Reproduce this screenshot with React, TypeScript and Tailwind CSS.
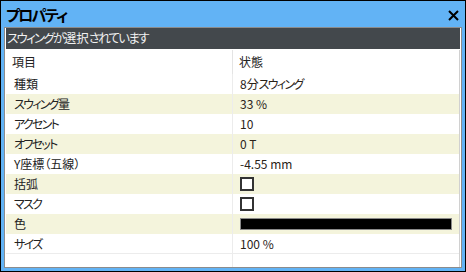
import React from 'react'

type Row = {
  label: string
  value?: string
  kind?: 'text' | 'check' | 'color'
}

const rows: Row[] = [
  { label: '種類', value: '8分スウィング' },
  { label: 'スウィング量', value: '33 %' },
  { label: 'アクセント', value: '10' },
  { label: 'オフセット', value: '0 T' },
  { label: 'Y座標（五線）', value: '-4.55 mm' },
  { label: '括弧', kind: 'check' },
  { label: 'マスク', kind: 'check' },
  { label: '色', kind: 'color' },
  { label: 'サイズ', value: '100 %' },
]

const font = { fontFamily: '"Noto Sans CJK JP", "Noto Sans", sans-serif' }

// kana is narrower in the original UI font, so squeeze kana runs a bit
function Jp({ text }: { text: string }) {
  const parts = text.split(/([\u3040-\u30ff]+)/).filter(Boolean)
  return (
    <>
      {parts.map((p, i) =>
        /[\u3040-\u30ff]/.test(p) ? (
          <span key={i} className="tracking-[-1.7px]">{p}</span>
        ) : (
          <span key={i}>{p}</span>
        )
      )}
    </>
  )
}

export default function App() {
  return (
    <div
      className="w-[466px] h-[272px] border border-black bg-[#62b3f5] flex flex-col [font-feature-settings:'palt']"
      style={font}
    >
      {/* Title bar */}
      <div className="h-[26px] flex items-center justify-between pl-[5px] pr-[6px] shrink-0">
        <span className="text-[15px] font-bold text-black leading-none"><Jp text="プロパティ" /></span>
        <svg width="11" height="11" viewBox="0 0 11 11" className="mt-[2px]">
          <path d="M1 1 L10 10 M10 1 L1 10" stroke="#000" strokeWidth="2" />
        </svg>
      </div>

      {/* Panel body */}
      <div className="mx-[3px] mb-[3px] flex-1 border border-[#8c8c8c] bg-white flex flex-col overflow-hidden">
        <div className="h-[21px] mx-[1px] bg-[#43484c] flex items-center px-[1px] shrink-0">
          <span className="text-[12.5px] text-[#f0f0f0] leading-none"><Jp text="スウィングが選択されています" /></span>
        </div>

        <div className="flex-1 flex flex-col mx-[1px] mt-[1px] border-r border-[#d0d0d0]">
          {/* Header */}
          <div className="h-[24px] flex shrink-0">
            <div className="w-[227px] flex items-center pl-[6px] border-r border-[#e4e4e4]">
              <span className="text-[12px] text-[#222] leading-none">項目</span>
            </div>
            <div className="flex-1 flex items-center pl-[6px]">
              <span className="text-[12px] text-[#222] leading-none">状態</span>
            </div>
          </div>

          {rows.map((r, i) => (
            <div
              key={r.label}
              className={`h-[20px] flex shrink-0 ${i % 2 === 1 ? 'bg-[#f4f4dc]' : 'bg-white'} ${i === rows.length - 1 ? 'border-b border-[#ececec]' : ''}`}
            >
              <div className="w-[227px] flex items-center pl-[8px] border-r border-[#ececec]">
                <span className="text-[12px] text-[#222] leading-none"><Jp text={r.label} /></span>
              </div>
              <div className="flex-1 flex items-center pl-[7px] pr-[7px]">
                {r.kind === 'check' ? (
                  <div className="w-[14px] h-[14px] border-2 border-[#333] bg-white" />
                ) : r.kind === 'color' ? (
                  <div className="flex-1 h-[12px] border border-[#8a8a8a] bg-black" />
                ) : (
                  <span className="text-[12px] text-[#2a2218] leading-none"><Jp text={r.value ?? ''} /></span>
                )}
              </div>
            </div>
          ))}

          <div className="flex-1 flex">
            <div className="w-[227px] border-r border-[#ececec]" />
            <div className="flex-1" />
          </div>
        </div>
      </div>
    </div>
  )
}
